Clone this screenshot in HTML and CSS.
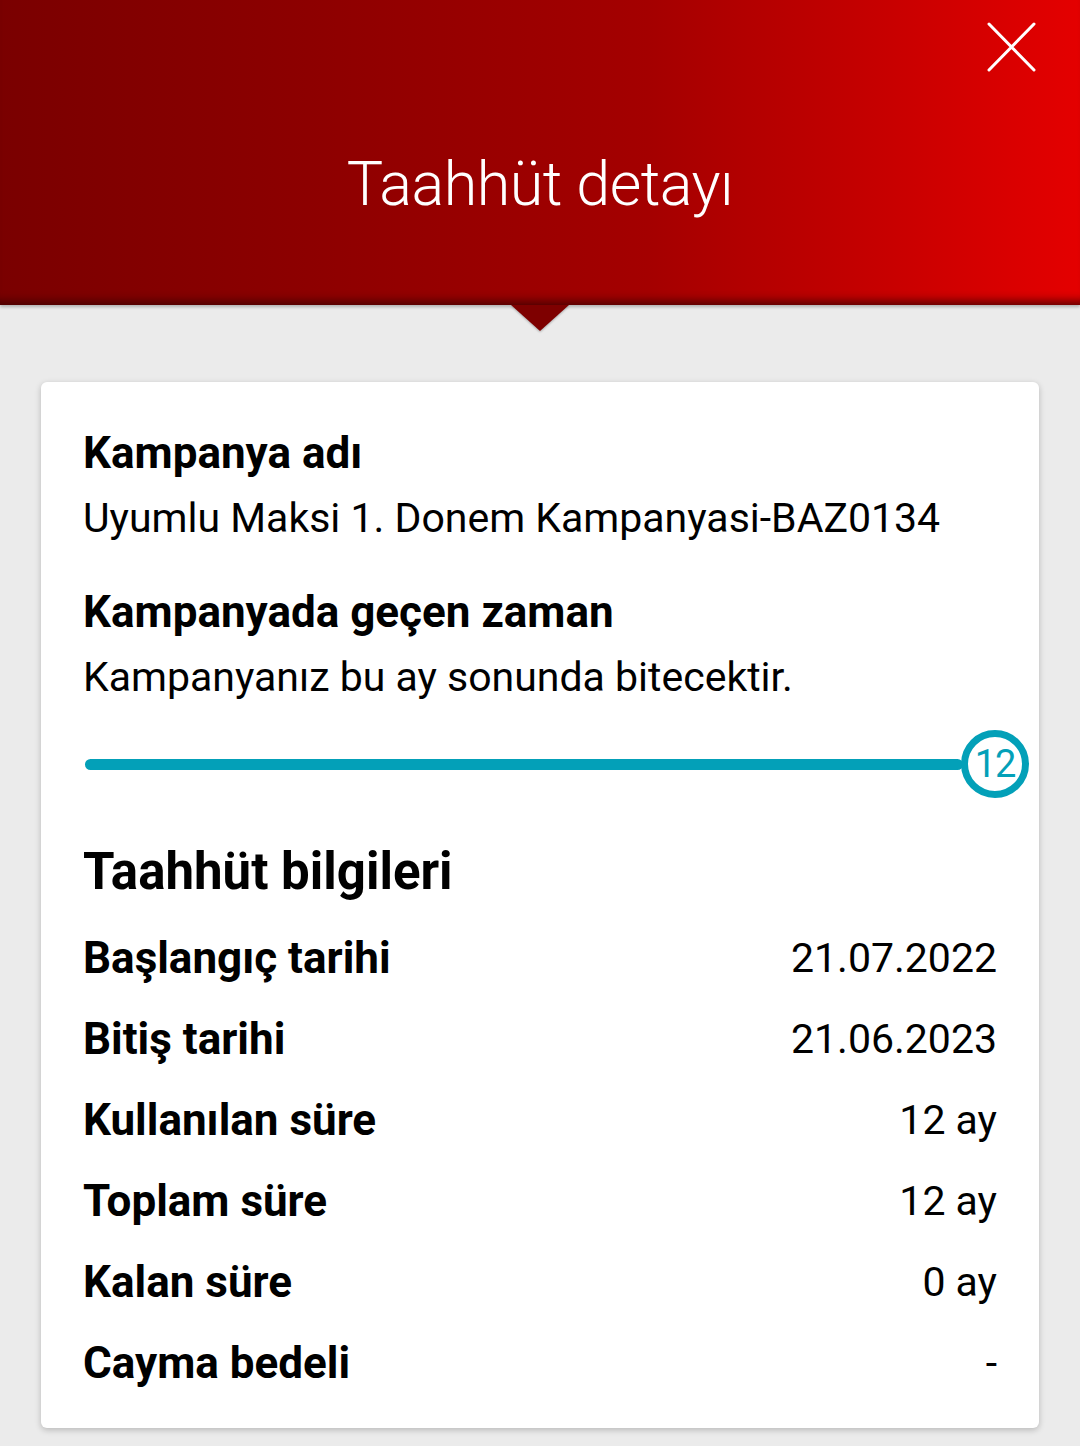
FILE: index.html
```html
<!DOCTYPE html>
<html lang="tr">
<head>
<meta charset="utf-8">
<title>Taahhüt detayı</title>
<link rel="stylesheet" href="styles.css">
</head>
<body>
<header class="hero">
  <button class="close" aria-label="Kapat">
    <svg width="50" height="50" viewBox="0 0 50 50"><path d="M3 2 L48 48 M48 2 L3 48" stroke="#fff" stroke-width="3" stroke-linecap="round" fill="none"/></svg>
  </button>
  <h1 class="hero-title">Taahhüt detayı</h1>
</header>
<main class="page">
  <section class="card">
    <h2 class="label">Kampanya adı</h2>
    <p class="text">Uyumlu Maksi 1. Donem Kampanyasi-BAZ0134</p>
    <h2 class="label label-gap">Kampanyada geçen zaman</h2>
    <p class="text">Kampanyanız bu ay sonunda bitecektir.</p>
    <div class="progress">
      <div class="track"></div>
      <div class="knob">12</div>
    </div>
    <h3 class="section-title">Taahhüt bilgileri</h3>
    <dl class="rows">
      <div class="row"><dt>Başlangıç tarihi</dt><dd>21.07.2022</dd></div>
      <div class="row"><dt>Bitiş tarihi</dt><dd>21.06.2023</dd></div>
      <div class="row"><dt>Kullanılan süre</dt><dd>12 ay</dd></div>
      <div class="row"><dt>Toplam süre</dt><dd>12 ay</dd></div>
      <div class="row"><dt>Kalan süre</dt><dd>0 ay</dd></div>
      <div class="row"><dt>Cayma bedeli</dt><dd>-</dd></div>
    </dl>
  </section>
</main>
</body>
</html>
```
FILE: styles.css
```css
* { box-sizing: border-box; }
html, body { margin: 0; padding: 0; }
body {
  width: 1080px;
  height: 1446px;
  overflow: hidden;
  background: #ebebeb;
  font-family: Roboto, "Noto Sans", "Liberation Sans", sans-serif;
  color: #000;
}
.hero {
  position: relative;
  height: 305px;
  background: linear-gradient(90deg, #7a0000 0%, #8e0000 30%, #a40000 60%, #e40000 100%);
  box-shadow: inset 0 -12px 10px -8px rgba(60,0,0,0.8), 0 2px 3px rgba(0,0,0,0.25);
  display: flex;
  align-items: center;
  justify-content: center;
}
.hero::after {
  content: "";
  position: absolute;
  left: 511px;
  bottom: -26px;
  border-left: 29px solid transparent;
  border-right: 29px solid transparent;
  border-top: 26px solid #7e0000;
  filter: drop-shadow(0 1px 1px rgba(0,0,0,0.3));
}
.close {
  position: absolute;
  top: 22px;
  right: 44px;
  width: 50px;
  height: 50px;
  padding: 0;
  border: 0;
  background: transparent;
}
.close svg { display: block; }
.hero-title {
  margin: 0;
  padding-top: 62px;
  color: #fff;
  font-weight: 300;
  font-size: 61px;
  letter-spacing: -0.5px;
}
.page {
  padding: 77px 41px 0;
}
.card {
  background: #fff;
  border-radius: 6px;
  box-shadow: 0 2px 6px rgba(0,0,0,0.22);
  padding: 43px 42px 25px 42px;
}
.label {
  margin: 0;
  font-size: 44px;
  line-height: 56px;
  font-weight: 700;
}
.label-gap { margin-top: 38px; }
.text {
  margin: 9px 0 0;
  font-size: 41px;
  line-height: 56px;
  font-weight: 400;
}
.progress {
  display: flex;
  align-items: center;
  margin: 25px -32px 0 2px;
  height: 68px;
}
.track {
  flex: 1;
  height: 11px;
  border-radius: 6px;
  background: #03a0b8;
}
.knob {
  width: 68px;
  height: 68px;
  margin-left: -2px;
  border: 7px solid #03a0b8;
  border-radius: 50%;
  background: #fff;
  color: #03a0b8;
  font-size: 38px;
  display: flex;
  align-items: center;
  justify-content: center;
  letter-spacing: -1px;
}
.section-title {
  margin: 39px 0 10px;
  font-size: 51px;
  line-height: 70px;
  font-weight: 700;
}
.rows { margin: 0; }
.row {
  display: flex;
  justify-content: space-between;
  align-items: center;
  height: 81px;
}
.row dt { font-weight: 700; font-size: 44px; }
.row dd { margin: 0; font-weight: 400; font-size: 41px; }
```
